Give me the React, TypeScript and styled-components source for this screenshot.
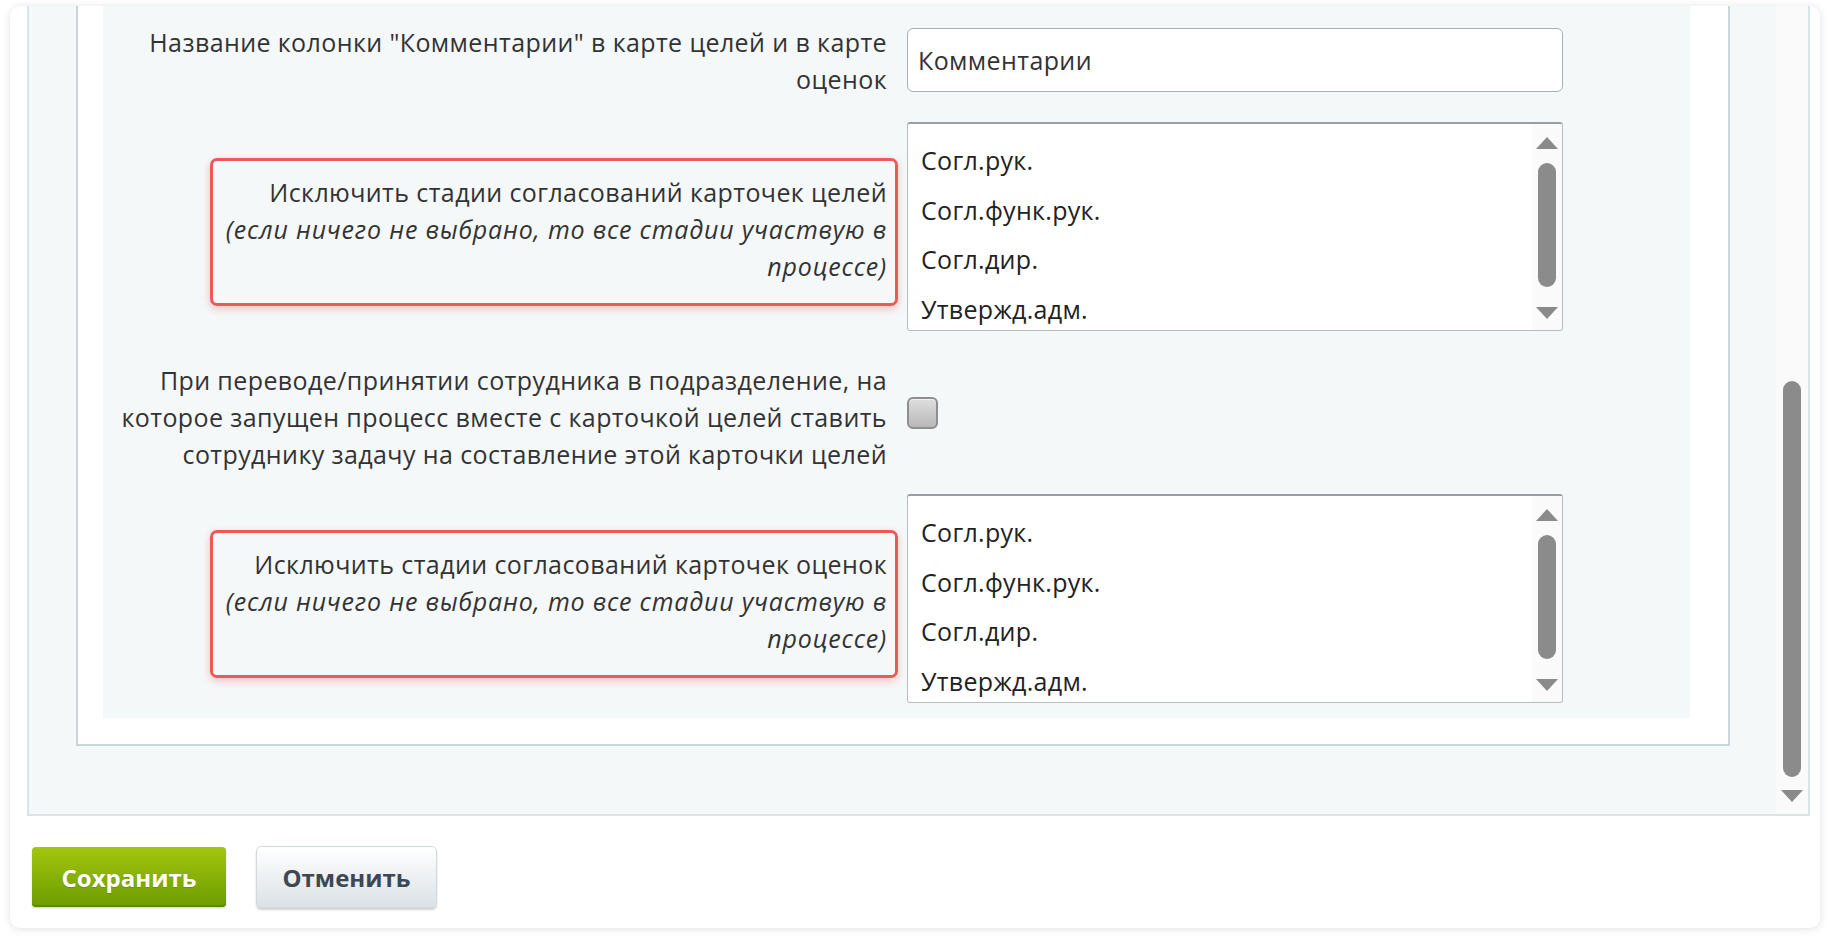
import React from 'react'
import styled, { createGlobalStyle } from 'styled-components'

const GlobalStyle = createGlobalStyle`
  html, body {
    margin: 0;
    background: #fff;
  }
  body {
    font-family: "Open Sans", "Noto Sans", sans-serif;
    color: #333;
  }
  * {
    box-sizing: border-box;
  }
`

const Page = styled.div`
  padding: 6px 10px 15px 10px;
`
const Card = styled.div`
  background: #fff;
  border-radius: 10px;
  box-shadow: 0 1px 8px rgba(0, 0, 0, 0.12);
  padding: 0 10px 20px 17px;
`
const Panel = styled.div`
  display: flex;
  background: #f5f8f9;
  border: 2px solid #d9e3ea;
  border-top: 0;
`
const Viewport = styled.div`
  flex: 1;
  overflow: hidden;
  padding: 0 46px 68px 47px;
`
const Fieldset = styled.div`
  background: #fff;
  border: 2px solid #ccd5da;
  border-top: 0;
  padding: 0 38px 26px 25px;
`
const FormTable = styled.div`
  display: grid;
  grid-template-columns: 784px 1fr;
  column-gap: 20px;
  background: #f5f8f9;
  padding-top: 1px;
`
const LabelCell = styled.div<{ $pt?: number; $pb?: number }>`
  display: flex;
  justify-content: flex-end;
  align-items: center;
  padding: ${({ $pt }) => $pt ?? 15}px 0 ${({ $pb }) => $pb ?? 15}px;
`
const ControlCell = styled.div<{ $pt?: number; $pb?: number }>`
  display: flex;
  align-items: center;
  padding: ${({ $pt }) => $pt ?? 15}px 0 ${({ $pb }) => $pb ?? 15}px;
`
const Label = styled.div`
  font-size: 25px;
  line-height: 37px;
  letter-spacing: 0.4px;
  text-align: right;
  white-space: nowrap;
  color: #333;
  em {
    font-style: italic;
    letter-spacing: 0.8px;
  }
`
const Highlight = styled.div`
  border: 3px solid #ea5a5a;
  border-radius: 7px;
  padding: 13px 8px 18px 13px;
  margin-right: -11px;
  margin-top: 10px;
  box-shadow: 0 3px 9px rgba(234, 90, 90, 0.35);
`
const TextInput = styled.input`
  width: 656px;
  height: 64px;
  border: 1.5px solid #a7b0b7;
  border-radius: 6px;
  padding: 0 10px;
  font-family: "Open Sans", "Noto Sans", sans-serif;
  font-size: 25px;
  letter-spacing: 0.4px;
  color: #333;
  background: #fff;
  outline: none;
`
const ListBox = styled.div`
  display: flex;
  width: 656px;
  height: 209px;
  background: #fff;
  border: 1px solid #b9bcbf;
  border-top: 2px solid #9a9ea2;
  border-radius: 3px;
  overflow: hidden;
`
const Options = styled.div`
  flex: 1;
  overflow: hidden;
  padding: 12px 0 0 13px;
`
const Option = styled.div`
  height: 49.5px;
  line-height: 49.5px;
  font-size: 25px;
  letter-spacing: 0.3px;
  color: #222;
  white-space: nowrap;
`
const ScrollColumn = styled.div<{ $width: number }>`
  width: ${({ $width }) => $width}px;
  flex-shrink: 0;
  display: flex;
  flex-direction: column;
  align-items: center;
  background: #fafafa;
`
const Thumb = styled.div<{ $height: number; $mt?: number }>`
  width: 18px;
  height: ${({ $height }) => $height}px;
  margin-top: ${({ $mt }) => $mt ?? 0}px;
  border-radius: 9px;
  background: #8b8b8b;
  flex-shrink: 0;
`
const Spacer = styled.div`
  flex: 1;
`
const ArrowIcon = styled.svg<{ $mt?: number; $mb?: number }>`
  display: block;
  flex-shrink: 0;
  margin-top: ${({ $mt }) => $mt ?? 0}px;
  margin-bottom: ${({ $mb }) => $mb ?? 0}px;
`
const CheckBox = styled.input`
  appearance: none;
  margin: 0;
  width: 31px;
  height: 32px;
  border: 2px solid #8e8e8e;
  border-radius: 6px;
  background: linear-gradient(#dedede, #b8b8b8);
  box-shadow: inset 0 1px 0 rgba(255, 255, 255, 0.6);
`
const Buttons = styled.div`
  display: flex;
  align-items: center;
  gap: 30px;
  margin-top: 30px;
  padding-left: 5px;
`
const SaveButton = styled.button`
  width: 194px;
  height: 60px;
  border: 0;
  border-radius: 4px;
  background: linear-gradient(#a3c50f, #6c9c00);
  box-shadow: inset 0 -2px 0 #5f8a00, 0 1px 2px rgba(0, 0, 0, 0.2);
  font-family: "Open Sans", "Noto Sans", sans-serif;
  font-size: 24px;
  font-weight: 700;
  color: #fff;
  text-shadow: 0 1px 1px rgba(0, 0, 0, 0.15);
`
const CancelButton = styled.button`
  width: 181px;
  height: 62px;
  border: 1px solid #d2d9dd;
  border-radius: 5px;
  background: linear-gradient(#ffffff, #dbe2e6);
  box-shadow: 0 2px 2px rgba(0, 0, 0, 0.18);
  font-family: "Open Sans", "Noto Sans", sans-serif;
  font-size: 24px;
  font-weight: 700;
  color: #3d4852;
`

const Arrow = ({ dir, mt, mb }: { dir: 'up' | 'down'; mt?: number; mb?: number }) => (
  <ArrowIcon width="22" height="12" viewBox="0 0 22 12" $mt={mt} $mb={mb}>
    <polygon points={dir === 'up' ? '11,0 22,12 0,12' : '0,0 22,0 11,12'} fill="#8a8a8a" />
  </ArrowIcon>
)

const stages = ['Согл.рук.', 'Согл.функ.рук.', 'Согл.дир.', 'Утвержд.адм.']

const StageList = () => (
  <ListBox>
    <Options>
      {stages.map((s) => (
        <Option key={s}>{s}</Option>
      ))}
    </Options>
    <ScrollColumn $width={30}>
      <Arrow dir="up" mt={13} />
      <Thumb $height={124} $mt={14} />
      <Arrow dir="down" mt={20} />
    </ScrollColumn>
  </ListBox>
)

const App = () => (
  <Page>
    <GlobalStyle />
    <Card>
      <Panel>
        <Viewport>
          <Fieldset>
            <FormTable>
              <LabelCell $pt={17} $pb={9}>
                <Label>
                  Название колонки "Комментарии" в карте целей и в карте
                  <br />
                  оценок
                </Label>
              </LabelCell>
              <ControlCell $pt={21} $pb={15}>
                <TextInput defaultValue="Комментарии" />
              </ControlCell>

              <LabelCell>
                <Highlight>
                  <Label>
                    Исключить стадии согласований карточек целей
                    <br />
                    <em>(если ничего не выбрано, то все стадии участвую в</em>
                    <br />
                    <em>процессе)</em>
                  </Label>
                </Highlight>
              </LabelCell>
              <ControlCell>
                <StageList />
              </ControlCell>

              <LabelCell $pt={16} $pb={6}>
                <Label>
                  При переводе/принятии сотрудника в подразделение, на
                  <br />
                  которое запущен процесс вместе с карточкой целей ставить
                  <br />
                  сотруднику задачу на составление этой карточки целей
                </Label>
              </LabelCell>
              <ControlCell $pt={11} $pb={11}>
                <CheckBox type="checkbox" />
              </ControlCell>

              <LabelCell>
                <Highlight>
                  <Label>
                    Исключить стадии согласований карточек оценок
                    <br />
                    <em>(если ничего не выбрано, то все стадии участвую в</em>
                    <br />
                    <em>процессе)</em>
                  </Label>
                </Highlight>
              </LabelCell>
              <ControlCell>
                <StageList />
              </ControlCell>
            </FormTable>
          </Fieldset>
        </Viewport>
        <ScrollColumn $width={32}>
          <Spacer />
          <Thumb $height={396} />
          <Arrow dir="down" mt={13} mb={12} />
        </ScrollColumn>
      </Panel>
      <Buttons>
        <SaveButton>Сохранить</SaveButton>
        <CancelButton>Отменить</CancelButton>
      </Buttons>
    </Card>
  </Page>
)

export default App
